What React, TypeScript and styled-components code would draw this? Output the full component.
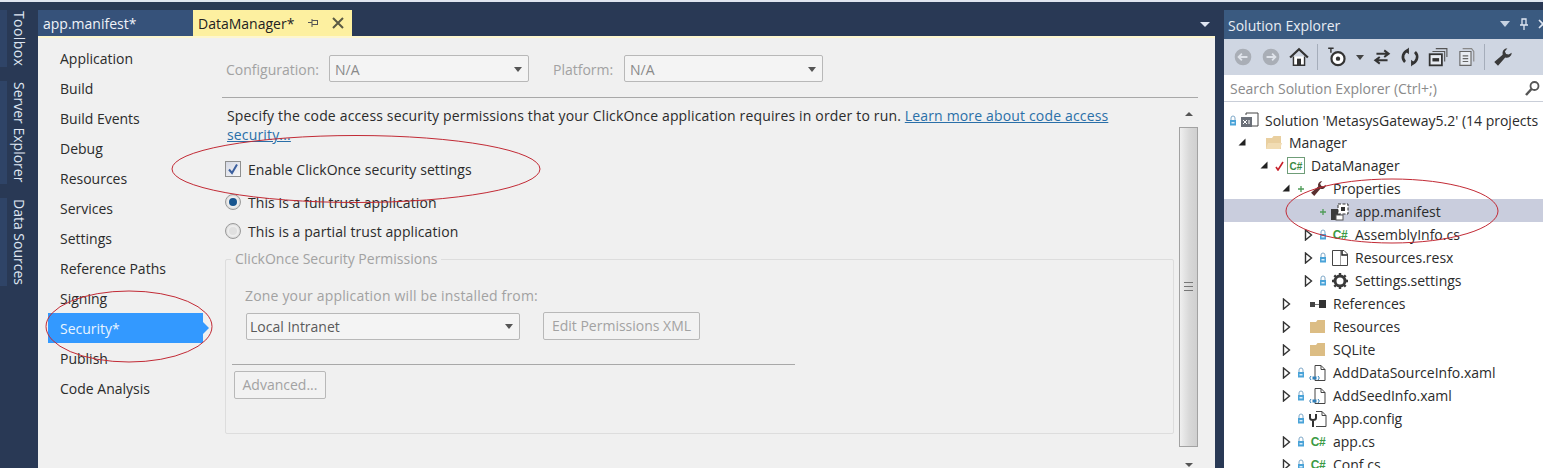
import React from "react";
import styled, { createGlobalStyle } from "styled-components";

const Global = createGlobalStyle`
  html, body { margin: 0; padding: 0; background: #293955; overflow: hidden; }
  * { box-sizing: border-box; }
`;
const FONT = `"Open Sans", "Noto Sans", "Liberation Sans", sans-serif`;

const Page = styled.div`
  position: relative; width: 1543px; height: 468px; overflow: hidden;
  background: #293955; border-top: 2px solid #dfe5f0; display: flex;
  font-family: ${FONT}; font-size: 14px; color: #222;
`;
const Rail = styled.div`
  width: 38px; display: flex; flex-direction: column; align-items: flex-start; padding: 8px 0 0 0; gap: 14px; flex: none;
`;
const RailTab = styled.div`
  writing-mode: vertical-rl; color: #dfe6f2; font-size: 14px; line-height: 20px; white-space: nowrap;
  border-left: 7px solid #2f4467; padding: 1px 0 1px 2px;
  &:first-child { letter-spacing: 0.4px; }
`;
const Doc = styled.div`
  width: 1177px; flex: none; display: flex; flex-direction: column; padding-top: 8px;
`;
const TabStrip = styled.div`
  height: 26px; display: flex; align-items: stretch; flex: none;
`;
const Tab = styled.div`
  width: 155px; background: #36527a; color: #f0f3f8; padding: 4px 0 0 5px; white-space: nowrap;
`;
const ActiveTab = styled.div`
  width: 159px; background: #fdf0a0; color: #222; padding: 4px 0 0 5px; display: flex; gap: 14px; white-space: nowrap;
`;
const TabIcons = styled.span`
  display: flex; gap: 13px; align-items: center; height: 18px; margin-top: 0;
`;
const StripMenu = styled.div`
  margin-left: auto; width: 0; height: 0; margin-top: 12px; margin-right: 5px;
  border-left: 5px solid transparent; border-right: 5px solid transparent; border-top: 5px solid #dfe6f2;
`;
const DocBody = styled.div`
  flex: 1; background: #f0f0f0; display: flex; border-top: 2px solid #fdf6cf; min-height: 0;
`;
const Nav = styled.div`
  width: 184px; flex: none; padding-top: 5px; display: flex; flex-direction: column;
`;
const NavItem = styled.div<{ $active?: boolean }>`
  height: 30px; line-height: 32px; padding-left: 12px; margin-left: 10px; width: 155px; position: relative;
  background: ${(p) => (p.$active ? "#3399ff" : "transparent")};
  color: ${(p) => (p.$active ? "#e8f4ff" : "#2b2b2b")};
  ${(p) => p.$active && `&::after { content: ""; position: absolute; left: 100%; top: 9px; border-left: 6px solid #3399ff; border-top: 6px solid transparent; border-bottom: 6px solid transparent; }`}
`;
const Main = styled.div`
  width: 976px; flex: none; display: flex; flex-direction: column;
`;
const TopForm = styled.div`
  height: 60px; flex: none; display: flex; align-items: flex-start; padding: 17px 0 0 4px; color: #a2a2a2; border-bottom: 1px solid #a8a8a8;
`;
const FieldLabel = styled.span<{ $w: number }>`
  width: ${(p) => p.$w}px; line-height: 29px; flex: none;
`;
const Combo = styled.div<{ $w: number; $dark?: boolean; $mr?: number }>`
  width: ${(p) => p.$w}px; height: 27px; border: 1px solid #b8b8b8; border-radius: 2px; background: #f4f4f4; flex: none;
  display: flex; align-items: center; justify-content: space-between; padding: 1px 6px 0 ${(p) => (p.$dark ? 3 : 5)}px; line-height: 25px;
  margin-right: ${(p) => p.$mr ?? 0}px;
  color: ${(p) => (p.$dark ? "#5a5a5a" : "#8a8a8a")};
  &::after { content: ""; border-left: 4px solid transparent; border-right: 4px solid transparent; border-top: 5px solid #555; }
`;
const Lower = styled.div`
  display: flex; flex: 1; min-height: 0;
`;
const Scrollbar = styled.div`
  width: 19px; flex: none; margin-top: 2px; display: flex; flex-direction: column; align-items: center;
`;
const ScrollArrow = styled.div<{ $down?: boolean }>`
  height: 27px; width: 0; flex: none;
  &::before { content: ""; display: block; margin: ${(p) => (p.$down ? "16px" : "12px")} 0 0 -4px; width: 0; height: 0; border-left: 4px solid transparent; border-right: 4px solid transparent;
    ${(p) => (p.$down ? "border-top: 4px solid #555;" : "border-bottom: 4px solid #555;")} }
`;
const Thumb = styled.div`
  width: 19px; height: 320px; flex: none; border: 1px solid #a2a2a2; background: linear-gradient(90deg, #efefef, #d8d8d8 55%, #cfcfcf);
  display: flex; flex-direction: column; justify-content: center; align-items: center; gap: 2px;
  span { display: block; width: 9px; height: 1px; background: #777; margin-bottom: 1px; }
`;
const Panel = styled.div`
  padding: 8px 0 0 5px; width: 957px; flex: none;
`;
const Intro = styled.p`
  margin: 0; line-height: 19px; color: #2b2b2b; width: 910px; letter-spacing: 0.16px;
`;
const Link = styled.a`
  color: #2a6fa8; text-decoration: underline;
`;
const CheckRow = styled.div<{ $mt: number }>`
  display: flex; align-items: center; gap: 7px; height: 22px; margin: ${(p) => p.$mt}px 0 0 -2px; color: #2b2b2b; white-space: nowrap; letter-spacing: 0.08px;
`;
const Check = styled.span`
  width: 16px; height: 16px; border: 1px solid #8e8f8f; background: linear-gradient(135deg, #d4d8e4, #f8f8f8); display: flex; align-items: center; justify-content: center; flex: none;
`;
const Radio = styled.span<{ $on?: boolean }>`
  width: 16px; height: 16px; border-radius: 50%; border: 1px solid #9a9a9a; background: #eee; flex: none; display: flex; align-items: center; justify-content: center;
  box-shadow: inset 0 0 2px #bbb;
  &::after { content: ""; width: 8px; height: 8px; border-radius: 50%; background: ${(p) => (p.$on ? "#17558f" : "#e0e0e0")}; }
`;
const Group = styled.fieldset`
  margin: 17px 0 0 -2px; padding: 26px 0 0 20px; width: 949px; height: 175px; border: 1px solid #dddddd; border-radius: 2px; position: relative; color: #a2a2a2;
`;
const Legend = styled.legend`
  position: absolute; top: -11px; left: 5px; padding: 0 4px; background: #f0f0f0;
`;
const GroupLabel = styled.div`
  line-height: 20px; letter-spacing: 0.18px; margin-left: -1px;
`;
const ZoneRow = styled.div`
  display: flex; gap: 23px; margin-top: 6px; align-items: center;
`;
const DisabledButton = styled.div<{ $w: number }>`
  width: ${(p) => p.$w}px; height: 28px; border: 1px solid #b8b8b8; border-radius: 2px; background: #f2f2f2; line-height: 26px; text-align: center; color: #a2a2a2; flex: none;
`;
const Rule = styled.div`
  width: 563px; height: 1px; background: #a8a8a8; margin: 24px 0 6px -14px;
`;
const AdvancedButton = styled(DisabledButton)`
  margin-left: -12px;
`;
const Side = styled.div`
  margin: 8px 0 0 9px; width: 319px; flex: none; display: flex; flex-direction: column; background: #fff;
`;
const SideTitle = styled.div`
  height: 29px; background: #3a5a80; color: #e8edf4; padding: 6px 0 0 4px; display: flex; justify-content: space-between; flex: none; white-space: nowrap; overflow: visible;
`;
const TitleIcons = styled.span`
  display: flex; gap: 9px; align-items: center; height: 16px; margin-right: -5px;
`;
const Toolbar = styled.div`
  height: 36px; background: #cfd6e2; display: flex; align-items: center; padding-left: 9px; gap: 8px; flex: none;
`;
const Sep = styled.span`
  width: 1px; height: 26px; background: #a5adba; flex: none;
`;
const DropCaret = styled.svg`
  margin-left: -2px; flex: none;
`;
const Search = styled.div`
  height: 27px; background: #fff; border-bottom: 1px solid #c9ced8; color: #8a8a8a; display: flex; align-items: center; justify-content: space-between; padding: 0 2px 0 6px; flex: none;
`;
const Tree = styled.div`
  flex: 1; padding-top: 5px; overflow: hidden; min-height: 0;
`;
const Row = styled.div<{ $sel?: boolean; $indent: number; $first?: boolean }>`
  height: 23px; display: flex; align-items: center; padding-left: ${(p) => p.$indent}px; padding-top: ${(p) => (p.$first ? 3 : 2)}px; white-space: nowrap;
  background: ${(p) => (p.$sel ? "#c9cddd" : "transparent")}; color: #2b2b2b;
`;
const Arrow = styled.span`
  width: 14px; height: 14px; flex: none; display: flex; align-items: center; justify-content: flex-start; margin: 0 1px 0 -1px;
`;
const Badge = styled.span`
  width: 11px; flex: none; display: flex; align-items: center; font-size: 11px; line-height: 1;
`;
const Ic = styled.span`
  width: 20px; height: 18px; flex: none; display: flex; align-items: center; justify-content: center; margin-right: 5px;
`;
const CsLabel = styled.span`
  color: #3b9a45; font: bold 12px "Liberation Sans", sans-serif; letter-spacing: -0.5px;
`;
const Overlay = styled.svg`
  position: absolute; left: 0; top: 0; pointer-events: none;
`;

const Open = () => (<svg width="9" height="9" viewBox="0 0 9 9"><path d="M7.500 0.500V7.500H0.500Z" fill="#222" /></svg>);
const Closed = () => (<svg width="9" height="12" viewBox="0 0 9 12"><path d="M1.500 1L7.500 6 1.500 11Z" fill="#fff" stroke="#333" strokeWidth="1.400" /></svg>);
const Lock = () => (<svg width="8" height="11" viewBox="0 0 8 11"><path d="M2 5V3a2 2 0 0 1 4 0v2" fill="none" stroke="#7fa9c9" /><rect x="1" y="5" width="6" height="5.500" fill="#4aa3d8" /><rect x="2.500" y="7" width="3" height="1.500" fill="#d9eefb" /></svg>);
const Plus = () => (<svg width="8" height="8" viewBox="0 0 8 8"><path d="M4 1V7M1 4H7" stroke="#4f9c58" strokeWidth="1.300" /></svg>);
const RedCheck = () => (<svg width="9" height="10" viewBox="0 0 9 10"><path d="M1 6L3 9 8 1" fill="none" stroke="#c8202a" strokeWidth="1.600" /></svg>);
const Folder = ({ light }: { light?: boolean }) => (
  <svg width="18" height="15" viewBox="0 0 18 15"><path d="M1 3h6l1.500-2H16V14H1Z" fill={light ? "#e9cf9f" : "#dcbd84"} />{light && <path d="M3 8H17L15 14H1Z" fill="#f1dcb3" />}</svg>
);
const Doc2 = ({ children }: { children?: React.ReactNode }) => (
  <svg width="18" height="18" viewBox="0 0 18 18"><path d="M6 1.500H12L16 5.500V16.500H6Z" fill="#fff" stroke="#444" /><path d="M12 1.500V5.500H16" fill="none" stroke="#444" />{children}</svg>
);
const Xaml = () => (<Doc2><path d="M2 12L0.700 14 2 16M9 12L10.300 14 9 16" stroke="#2f7fb8" fill="none" /><rect x="3.500" y="12.500" width="4" height="3" fill="#2f7fb8" /></Doc2>);
const Wrench = ({ c = "#3a3a3a", s = 15 }: { c?: string; s?: number }) => (
  <svg width={s} height={s} viewBox="0 0 16 16"><path d="M15 4.500A4 4 0 0 1 9.800 8.300L4 15 1 12 7.700 6.200A4 4 0 0 1 11.500 1L9.500 3.500 10.500 5.500 12.500 6Z" fill={c} /></svg>
);
const Gear = () => (
  <svg width="18" height="18" viewBox="0 0 18 18"><circle cx="9" cy="9" r="5" fill="none" stroke="#3a3a3a" strokeWidth="3" /><path d="M9 1V4M9 14V17M1 9H4M14 9H17M3.300 3.300L5.500 5.500M12.500 12.500L14.700 14.700M14.700 3.300L12.500 5.500M5.500 12.500L3.300 14.700" stroke="#3a3a3a" strokeWidth="2.400" /></svg>
);
const Manifest = () => (
  <svg width="20" height="18" viewBox="0 0 20 18"><rect x="1" y="6" width="9" height="11" fill="#3a3a3a" /><path d="M8 1H18V11H8Z" fill="#fff" stroke="#333" strokeDasharray="3 1.500" /><rect x="11" y="4" width="4" height="4" fill="#333" /><rect x="6" y="12" width="7" height="5" fill="#fff" stroke="#555" /></svg>
);
const Refs = () => (<svg width="18" height="10" viewBox="0 0 18 10"><rect x="1" y="3" width="5" height="5" fill="#444" /><path d="M6 5.500H10" stroke="#777" /><rect x="10" y="1" width="7" height="8" fill="#333" /></svg>);
const CsBox = () => (<svg width="18" height="17" viewBox="0 0 18 17"><rect x="0.500" y="0.500" width="17" height="16" fill="#fff" stroke="#6f9d78" /><text x="2.500" y="12.500" fontSize="10" fontWeight="bold" fill="#3b8a45" fontFamily="Liberation Sans">C#</text></svg>);
const Config = () => (<svg width="20" height="18" viewBox="0 0 20 18"><path d="M8 1.500H14L18 5.500V16.500H8" fill="#fff" stroke="#444" /><path d="M14 1.500V5.500H18" fill="none" stroke="#444" /><path d="M2 4V8Q2 10 5 10V17M8 4V8Q8 10 5 10" fill="none" stroke="#333" strokeWidth="2" /></svg>);
const Resx = () => (<svg width="20" height="18" viewBox="0 0 20 18"><path d="M2.500 1.500H11V16.500H2.500Z" fill="#fff" stroke="#444" /><path d="M11 1.500H14L17.500 5V16.500H11" fill="#fff" stroke="#444" /><path d="M12 2V6H17" fill="none" stroke="#222" strokeWidth="1.500" /></svg>);
const SolutionIc = () => (<svg width="20" height="18" viewBox="0 0 20 18"><path d="M6 4V2H18V15H12" fill="none" stroke="#444" /><rect x="1" y="6" width="11" height="10" fill="#6a6f78" /><path d="M3 9L7 13M7 9L3 13M9 9V13" stroke="#fff" /></svg>);

const TREE: { t: string; i: number; a?: "o" | "c" | "n"; b?: React.ReactNode; ic?: React.ReactNode; sel?: boolean }[] = [
  { t: "Solution 'MetasysGateway5.2' (14 projects", i: 5, a: "n", b: <Lock />, ic: <SolutionIc /> },
  { t: "Manager", i: 15, a: "o", ic: <Folder light /> },
  { t: "DataManager", i: 37, a: "o", b: <RedCheck />, ic: <CsBox /> },
  { t: "Properties", i: 59, a: "o", b: <Plus />, ic: <Wrench c="#5a3030" s={17} /> },
  { t: "app.manifest", i: 81, b: <Plus />, ic: <Manifest />, sel: true },
  { t: "AssemblyInfo.cs", i: 81, a: "c", b: <Lock />, ic: <CsLabel>C#</CsLabel> },
  { t: "Resources.resx", i: 81, a: "c", b: <Lock />, ic: <Resx /> },
  { t: "Settings.settings", i: 81, a: "c", b: <Lock />, ic: <Gear /> },
  { t: "References", i: 59, a: "c", ic: <Refs /> },
  { t: "Resources", i: 59, a: "c", ic: <Folder /> },
  { t: "SQLite", i: 59, a: "c", ic: <Folder /> },
  { t: "AddDataSourceInfo.xaml", i: 59, a: "c", b: <Lock />, ic: <Xaml /> },
  { t: "AddSeedInfo.xaml", i: 59, a: "c", b: <Lock />, ic: <Xaml /> },
  { t: "App.config", i: 59, b: <Lock />, ic: <Config /> },
  { t: "app.cs", i: 59, a: "c", b: <Lock />, ic: <CsLabel>C#</CsLabel> },
  { t: "Conf.cs", i: 59, a: "c", b: <Lock />, ic: <CsLabel>C#</CsLabel> },
];
const NAV = ["Application", "Build", "Build Events", "Debug", "Resources", "Services", "Settings", "Reference Paths", "Signing", "Security*", "Publish", "Code Analysis"];

export default function App() {
  return (
    <Page>
      <Global />
      <Rail>
        <RailTab>Toolbox</RailTab>
        <RailTab>Server Explorer</RailTab>
        <RailTab>Data Sources</RailTab>
      </Rail>
      <Doc>
        <TabStrip>
          <Tab>app.manifest*</Tab>
          <ActiveTab>
            DataManager*
            <TabIcons>
              <svg width="11" height="11" viewBox="0 0 11 11"><path d="M4 1V9M4 2.500H10M4 6.500H10M9.500 2.500V6.500M0 4.500H4" fill="none" stroke="#555" /></svg>
              <svg width="12" height="12" viewBox="0 0 12 12"><path d="M1 1L11 11M11 1L1 11" stroke="#5a5a44" strokeWidth="2" /></svg>
            </TabIcons>
          </ActiveTab>
          <StripMenu />
        </TabStrip>
        <DocBody>
          <Nav>
            {NAV.map((n) => <NavItem key={n} $active={n === "Security*"}>{n}</NavItem>)}
          </Nav>
          <Main>
            <TopForm>
              <FieldLabel $w={103}>Configuration:</FieldLabel>
              <Combo $w={200} $mr={24}>N/A</Combo>
              <FieldLabel $w={71}>Platform:</FieldLabel>
              <Combo $w={199}>N/A</Combo>
            </TopForm>
            <Lower>
              <Panel>
                <Intro>Specify the code access security permissions that your ClickOnce application requires in order to run. <Link>Learn more about code access security...</Link></Intro>
                <CheckRow $mt={14}>
                  <Check><svg width="12" height="12" viewBox="0 0 12 12"><path d="M2 6.500L5 10 10 1.500" fill="none" stroke="#3b5f9e" strokeWidth="2" /></svg></Check>
                  Enable ClickOnce security settings
                </CheckRow>
                <CheckRow $mt={11}><Radio $on />This is a full trust application</CheckRow>
                <CheckRow $mt={7}><Radio />This is a partial trust application</CheckRow>
                <Group>
                  <Legend>ClickOnce Security Permissions</Legend>
                  <GroupLabel>Zone your application will be installed from:</GroupLabel>
                  <ZoneRow>
                    <Combo $w={274} $dark>Local Intranet</Combo>
                    <DisabledButton $w={157}>Edit Permissions XML</DisabledButton>
                  </ZoneRow>
                  <Rule />
                  <AdvancedButton $w={92}>Advanced...</AdvancedButton>
                </Group>
              </Panel>
              <Scrollbar>
                <ScrollArrow />
                <Thumb><span /><span /><span /></Thumb>
                <ScrollArrow $down />
              </Scrollbar>
            </Lower>
          </Main>
        </DocBody>
      </Doc>
      <Side>
        <SideTitle>
          Solution Explorer
          <TitleIcons>
            <svg width="10" height="6" viewBox="0 0 10 6"><path d="M0 0H10L5 6Z" fill="#c6d2e2" /></svg>
            <svg width="10" height="13" viewBox="0 0 10 13"><path d="M3 1H7V7H3ZM1 7H9M5 7V12" fill="none" stroke="#dfe6f2" strokeWidth="1.300" /></svg>
            <svg width="10" height="10" viewBox="0 0 10 10"><path d="M1 1L9 9M9 1L1 9" stroke="#dfe6f2" strokeWidth="1.600" /></svg>
          </TitleIcons>
        </SideTitle>
        <Toolbar>
          <svg width="20" height="20" viewBox="0 0 18 18"><circle cx="9" cy="9" r="7.500" fill="#a9aeb6" /><path d="M13 9H5M8 6L5 9 8 12" stroke="#dfe3ea" strokeWidth="1.600" fill="none" /></svg>
          <svg width="20" height="20" viewBox="0 0 18 18"><circle cx="9" cy="9" r="7.500" fill="#a9aeb6" /><path d="M5 9H13M10 6L13 9 10 12" stroke="#dfe3ea" strokeWidth="1.600" fill="none" /></svg>
          <svg width="20" height="20" viewBox="0 0 18 18"><path d="M1 9.500L9 2 17 9.500" fill="none" stroke="#333" strokeWidth="2" /><path d="M4 8.500V16.500H14V8.500" fill="#fff" stroke="#333" strokeWidth="1.300" /><rect x="7.200" y="10.500" width="3.600" height="6" fill="#333" /></svg>
          <Sep />
          <svg width="24" height="20" viewBox="0 0 22 18"><circle cx="11" cy="10.500" r="6" fill="#fff" stroke="#333" strokeWidth="2" /><circle cx="11" cy="10.500" r="2" fill="#333" /><path d="M2 1H7M4.500 1V5" fill="none" stroke="#333" strokeWidth="1.300" /></svg>
          <DropCaret width="8" height="5" viewBox="0 0 8 5"><path d="M0 0H8L4 5Z" fill="#444" /></DropCaret>
          <svg width="20" height="18" viewBox="0 0 18 16"><path d="M4 5H14M11 2L15 5 11 8M14 11H4M7 8L3 11 7 14" fill="none" stroke="#333" strokeWidth="1.800" /></svg>
          <svg width="20" height="20" viewBox="0 0 18 18"><path d="M4.500 13.500A6.200 6.200 0 0 1 7.500 3M13.500 4.500A6.200 6.200 0 0 1 10.500 15" fill="none" stroke="#333" strokeWidth="2.400" /><path d="M8 0.500V6.500L4.500 3.500ZM10 11.500V17.500L13.500 14.500Z" fill="#333" /></svg>
          <svg width="20" height="20" viewBox="0 0 18 18"><rect x="1.500" y="6.500" width="11" height="10" fill="#e8ecf2" stroke="#333" strokeWidth="1.600" /><path d="M4 4H15V13M7 1.500H17V9" fill="none" stroke="#555" /><rect x="4" y="10" width="6" height="3" fill="#333" /></svg>
          <svg width="20" height="20" viewBox="0 0 18 18"><path d="M3.500 4V16.500H13.500V4Z" fill="#e8ecf2" stroke="#666" /><path d="M6 1.500H14L16 4V13" fill="none" stroke="#888" /><path d="M6 8H11M6 10.500H11M6 13H11" stroke="#666" /></svg>
          <Sep />
          <Wrench s={20} />
        </Toolbar>
        <Search>
          Search Solution Explorer (Ctrl+;)
          <svg width="17" height="17" viewBox="0 0 17 17"><circle cx="10.500" cy="6" r="4" fill="none" stroke="#555" strokeWidth="1.800" /><path d="M7.500 9L2 15" stroke="#555" strokeWidth="2.500" /></svg>
        </Search>
        <Tree>
          {TREE.map((r, idx) => (
            <Row key={r.t} $indent={r.i} $sel={r.sel} $first={idx === 0}>
              {r.a !== "n" && <Arrow>{r.a === "o" ? <Open /> : r.a === "c" ? <Closed /> : null}</Arrow>}
              <Badge>{r.b}</Badge>
              <Ic>{r.ic}</Ic>
              {r.t}
            </Row>
          ))}
        </Tree>
      </Side>
      <Overlay width="1543" height="468" viewBox="0 0 1543 468">
        <g fill="none" stroke="#c22a35" strokeWidth="1" transform="translate(0 -2)">
          <ellipse cx="356" cy="169" rx="184" ry="33.500" />
          <ellipse cx="129" cy="326.500" rx="83" ry="35.500" />
          <ellipse cx="1392" cy="211" rx="106" ry="32" />
        </g>
      </Overlay>
    </Page>
  );
}
